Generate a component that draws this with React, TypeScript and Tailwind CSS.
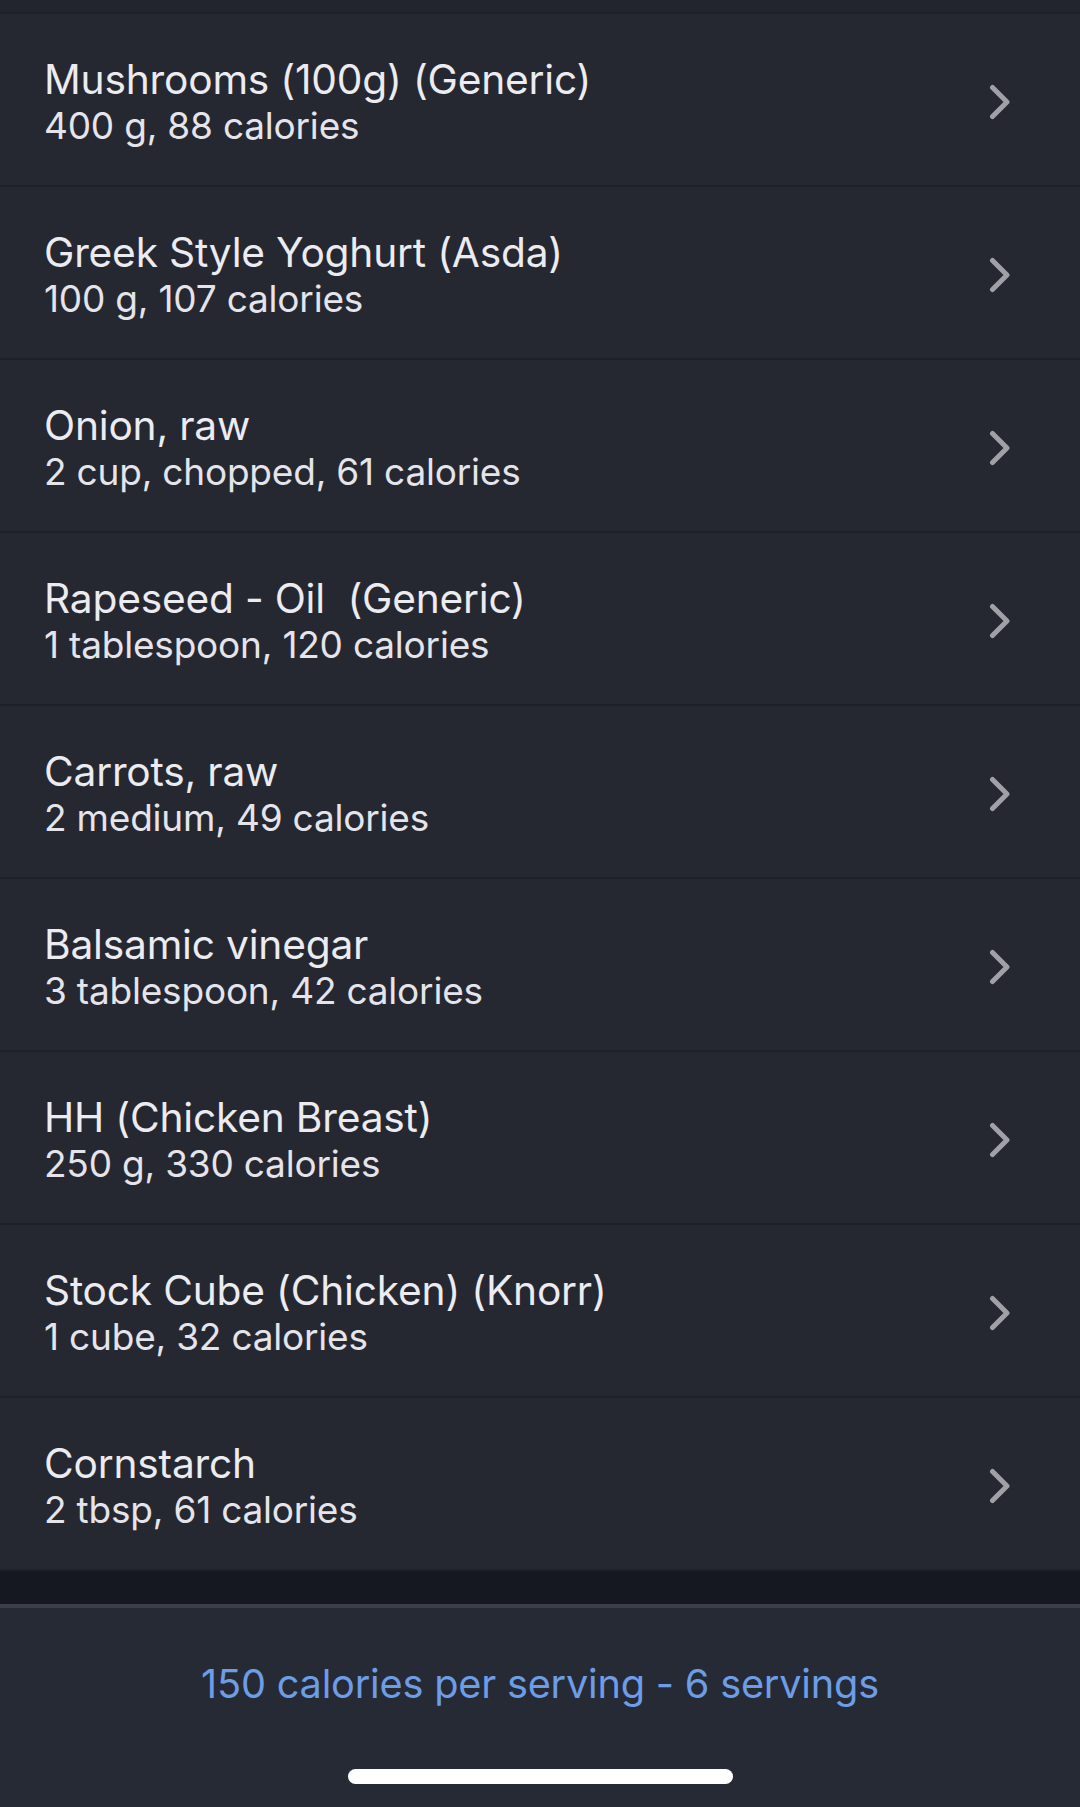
import React from "react";

const items = [
  { title: "Mushrooms (100g) (Generic)", sub: "400 g, 88 calories" },
  { title: "Greek Style Yoghurt (Asda)", sub: "100 g, 107 calories" },
  { title: "Onion, raw", sub: "2 cup, chopped, 61 calories" },
  { title: "Rapeseed - Oil\u00a0 (Generic)", sub: "1 tablespoon, 120 calories" },
  { title: "Carrots, raw", sub: "2 medium, 49 calories" },
  { title: "Balsamic vinegar", sub: "3 tablespoon, 42 calories" },
  { title: "HH (Chicken Breast)", sub: "250 g, 330 calories" },
  { title: "Stock Cube (Chicken) (Knorr)", sub: "1 cube, 32 calories" },
  { title: "Cornstarch", sub: "2 tbsp, 61 calories" },
];

function Chevron() {
  return (
    <svg width="22" height="36" viewBox="0 0 22 36" fill="none" className="mt-[4px]">
      <path
        d="M3.5 3.5 L18 18 L3.5 32.5"
        stroke="#a0a1a7"
        strokeWidth="5"
        strokeLinecap="round"
        strokeLinejoin="round"
      />
    </svg>
  );
}

export default function App() {
  return (
    <div
      className="w-[1080px] h-[1807px] bg-[#252731] flex flex-col overflow-hidden"
      style={{ fontFamily: "Inter, 'Noto Sans', sans-serif" }}
    >
      <div className="h-[14px] shrink-0 bg-[#23252e] border-b-2 border-[#1f2129]" />
      {items.map((it) => (
        <div
          key={it.title}
          className="h-[173px] shrink-0 flex items-center justify-between pl-[44px] pr-[69px] border-b-2 border-[#1f2129] bg-[#252731]"
        >
          <div className="flex flex-col mt-[6px]">
            <div className="text-[40.7px] leading-[46px] text-[#ebebf0] tracking-[-0.2px]">{it.title}</div>
            <div className="text-[37px] leading-[46px] text-[#e4e4ea] tracking-[-0.2px]">{it.sub}</div>
          </div>
          <Chevron />
        </div>
      ))}
      <div className="h-[33px] shrink-0 bg-[#161821]" />
      <div className="h-[4px] shrink-0 bg-[#3b3e4a]" />
      <div className="flex-1 bg-[#262a34] flex flex-col items-center pt-[52px]">
        <div className="text-[39.7px] leading-[48px] text-[#6d9de6] tracking-[-0.2px]">
          150 calories per serving - 6 servings
        </div>
        <div className="mt-[61px] w-[385px] h-[15px] rounded-full bg-white" />
      </div>
    </div>
  );
}
